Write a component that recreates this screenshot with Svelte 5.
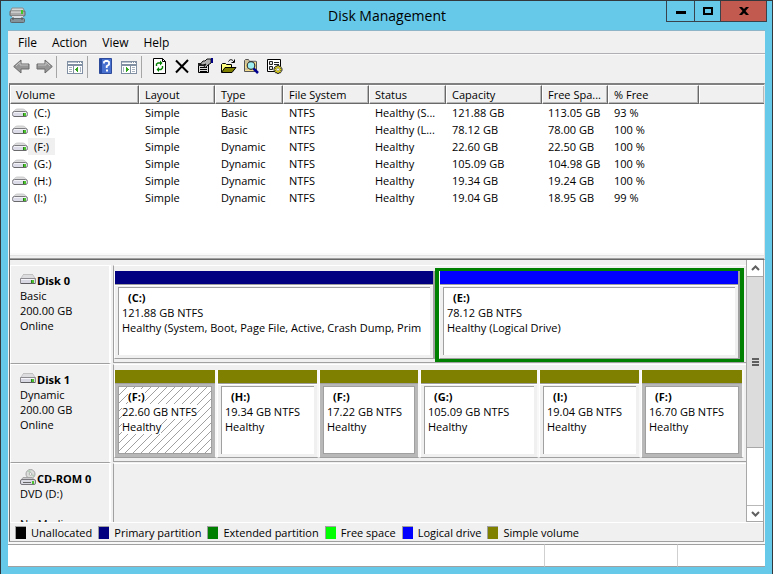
<script>
  const menus = ['File', 'Action', 'View', 'Help'];
  const columns = ['Volume', 'Layout', 'Type', 'File System', 'Status', 'Capacity', 'Free Spa...', '% Free', ''];
  const volumes = [
    ['(C:)', 'Simple', 'Basic', 'NTFS', 'Healthy (S...', '121.88 GB', '113.05 GB', '93 %'],
    ['(E:)', 'Simple', 'Basic', 'NTFS', 'Healthy (L...', '78.12 GB', '78.00 GB', '100 %'],
    ['(F:)', 'Simple', 'Dynamic', 'NTFS', 'Healthy', '22.60 GB', '22.50 GB', '100 %'],
    ['(G:)', 'Simple', 'Dynamic', 'NTFS', 'Healthy', '105.09 GB', '104.98 GB', '100 %'],
    ['(H:)', 'Simple', 'Dynamic', 'NTFS', 'Healthy', '19.34 GB', '19.24 GB', '100 %'],
    ['(I:)', 'Simple', 'Dynamic', 'NTFS', 'Healthy', '19.04 GB', '18.95 GB', '99 %']
  ];
  const disks = [
    {
      name: 'Disk 0', info: ['Basic', '200.00 GB', 'Online'],
      parts: [
        { name: '(C:)', size: '121.88 GB NTFS', status: 'Healthy (System, Boot, Page File, Active, Crash Dump, Prim', kind: 'primary', weight: 321 },
        { name: '(E:)', size: '78.12 GB NTFS', status: 'Healthy (Logical Drive)', kind: 'logical', weight: 301 }
      ]
    },
    {
      name: 'Disk 1', info: ['Dynamic', '200.00 GB', 'Online'],
      parts: [
        { name: '(F:)', size: '22.60 GB NTFS', status: 'Healthy', kind: 'simple', weight: 103, marked: true, hatched: true },
        { name: '(H:)', size: '19.34 GB NTFS', status: 'Healthy', kind: 'simple', weight: 102 },
        { name: '(F:)', size: '17.22 GB NTFS', status: 'Healthy', kind: 'simple', weight: 101, marked: true },
        { name: '(G:)', size: '105.09 GB NTFS', status: 'Healthy', kind: 'simple', weight: 119 },
        { name: '(I:)', size: '19.04 GB NTFS', status: 'Healthy', kind: 'simple', weight: 102 },
        { name: '(F:)', size: '16.70 GB NTFS', status: 'Healthy', kind: 'simple', weight: 103, marked: true }
      ]
    },
    { name: 'CD-ROM 0', cd: true, info: ['DVD (D:)', '\u00a0', 'No Media'], parts: [] }
  ];
  const legend = [
    ['unallocated', 'Unallocated'],
    ['primary', 'Primary partition'],
    ['extended', 'Extended partition'],
    ['free', 'Free space'],
    ['logical', 'Logical drive'],
    ['simple', 'Simple volume']
  ];
</script>

{#snippet volume()}
  <svg class="drive" width="16" height="10" viewBox="0 0 16 10" aria-hidden="true">
    <path d="M1 4C3 1.500 4 1 6 1h4c2 0 3 .5 5 3z" fill="#dededf" stroke="#c2c2c4" stroke-width=".8" />
    <rect x=".5" y="3.500" width="15" height="5" rx="2" fill="#dcdce8" stroke="#7c7c80" />
    <path d="M2 4.500h12" stroke="#f4f4f8" />
    <path d="M2 8.500h12" stroke="#69696c" />
    <path d="M11 5h3v3h-3z" fill="#4cc22e" />
    <path d="M11 5h1v3h-1z" fill="#2a7a1c" />
  </svg>
{/snippet}

{#snippet drive()}
  <svg class="drive" width="16" height="11" viewBox="0 0 16 11" aria-hidden="true">
    <path d="M3 1h10l3 4H0z" fill="#dddddf" />
    <path d="M3 .5h10" stroke="#c0c0c0" />
    <path d="M1 4.500l2-3.500M15 4.500L13 1" stroke="#c8c8ca" fill="none" />
    <path d="M.5 4.500h15v5H.5z" fill="#d8d8e2" stroke="#8c8c90" />
    <path d="M1 5.500h13" stroke="#f6f6fa" />
    <path d="M1 9.500h14" stroke="#5e5e62" />
    <path d="M11 6h3v3h-3z" fill="#4cc22e" />
    <path d="M11 6h1v3h-1z" fill="#2a7a1c" />
  </svg>
{/snippet}

{#snippet cdrom()}
  <svg class="cd" width="16" height="17" viewBox="0 0 16 17" aria-hidden="true">
    <circle cx="10.500" cy="5" r="4.500" fill="#dcdedc" stroke="#a4a4a4" />
    <path d="M10.500 5l-3-3 3-1zM10.500 5l3 3 1-2z" fill="#b2ccb6" />
    <circle cx="10.500" cy="5" r="1.300" fill="#fff" stroke="#999" stroke-width=".7" />
    <path d="M3 8.500h9l3 3H1z" fill="#c9c9cc" stroke="#a4a4a4" />
    <rect x=".5" y="10.500" width="15" height="5" rx="1.500" fill="#dadae2" stroke="#77777b" />
    <path d="M3 13.500h8" stroke="#666" />
    <path d="M12 12h2v3h-2z" fill="#4cc22e" />
  </svg>
{/snippet}

{#snippet part(p)}
  <div class="part {p.kind}" class:marked={p.marked} class:hatched={p.hatched}>
    <div class="bar"></div>
    <div class="frame">
      <div class="box">
        <div class="clip">
          <div class="pname"><b>{p.name}</b></div>
          <div><span>{p.size}</span></div>
          <div><span>{p.status}</span></div>
        </div>
      </div>
    </div>
  </div>
{/snippet}

<div class="window">
  <header class="title">
    <svg width="17" height="17" viewBox="0 0 17 17" aria-hidden="true">
      <path d="M3 1h11l2 4H1z" fill="#d4d6d6" stroke="#8c8c8c" />
      <rect x="1" y="4" width="15" height="5" rx="1" fill="#a9a9a9" stroke="#666" />
      <path d="M2 5h10" stroke="#eee" />
      <path d="M12 3h2v4h-2z" fill="#41c728" />
      <path d="M3 9h11v3H3z" fill="#d9dfe2" />
      <rect x="1.500" y="11.500" width="14" height="4" rx="1" fill="#84929a" stroke="#5d666b" />
      <path d="M4 10v3M13 10v3" stroke="#555" />
    </svg>
    <h1>Disk Management</h1>
    <div class="controls">
      <button class="min" aria-label="Minimize"><svg width="10" height="10" viewBox="0 0 10 10"><path d="M0 5h10v3H0z" /></svg></button>
      <button class="max" aria-label="Maximize"><svg width="10" height="10" viewBox="0 0 10 10"><path fill-rule="evenodd" d="M0 1h10v8H0zM2 3v4h6V3z" /></svg></button>
      <button class="close" aria-label="Close"><svg width="10" height="10" viewBox="0 0 10 10"><path d="M0 1h3l2 2 2-2h3L6.500 5 10 9H7L5 7 3 9H0l3.500-4z" /></svg></button>
    </div>
  </header>

  <div class="content">
    <nav class="menu">
      {#each menus as m}<button>{m}</button>{/each}
    </nav>

    <div class="tools" role="toolbar" aria-label="Tools">
      <button aria-label="Back"><svg width="17" height="17" viewBox="0 0 17 17"><path d="M.7 8.500L8 2v4h8v5H8v4z" fill="#969696" stroke="#6b6b6b" /><path d="M3 8l4-4v3h8" fill="none" stroke="#c4c4c4" /></svg></button>
      <button class="fwd" aria-label="Forward"><svg width="17" height="17" viewBox="0 0 17 17"><path d="M16.300 8.500L9 2v4H1v5h8v4z" fill="#969696" stroke="#6b6b6b" /><path d="M2 7h8V4l4 4" fill="none" stroke="#c4c4c4" /></svg></button>
      <i class="sep"></i>
      <button class="tree" aria-label="Show or hide console tree"><svg width="17" height="17" viewBox="0 0 17 17" shape-rendering="crispEdges"><path d="M0 3h16v13H0z" fill="#8290a3" /><path d="M1 5h14v1H1zM1 8h5v7H1zM7 8h8v7H7z" fill="#fff" /><path d="M1 4h9v1H1z" fill="#b8c2cf" /><path d="M11 4h1v1h-1zM13 4h1v1h-1z" fill="#fff" /><path d="M2 9h3v1H2zM2 11h3v1H2zM2 13h3v1H2zM13 9h1v5h-1z" fill="#a6b1bf" /><path d="M11 9v5L8 11.500z" fill="#31a51c" /></svg></button>
      <i class="sep"></i>
      <button class="help" aria-label="Help"><svg width="14" height="17" viewBox="0 0 14 17"><path d="M.5.500h12v15H.5z" fill="#4770cf" stroke="#2e4b9b" /><path d="M1 1h2v14H1z" fill="#2548a2" /><path d="M5 5.500V4l1.500-1h2L10 4v2.500L7.700 8.300V10" fill="none" stroke="#fff" stroke-width="1.800" /><path d="M7 11.500h2v2H7z" fill="#fff" /></svg></button>
      <button class="pane" aria-label="Show or hide action pane"><svg width="17" height="17" viewBox="0 0 17 17" shape-rendering="crispEdges"><path d="M0 3h16v13H0z" fill="#8290a3" /><path d="M1 5h14v1H1zM1 8h8v7H1zM10 8h5v7h-5z" fill="#fff" /><path d="M1 4h9v1H1z" fill="#b8c2cf" /><path d="M11 4h1v1h-1zM13 4h1v1h-1z" fill="#fff" /><path d="M11 9h3v1h-3zM11 11h3v1h-3zM11 13h3v1h-3zM2 9h1v5H2z" fill="#a6b1bf" /><path d="M5 9v5l3-2.500z" fill="#31a51c" /></svg></button>
      <i class="sep"></i>
      <button class="refresh" aria-label="Refresh"><svg width="16" height="17" viewBox="0 0 16 17"><path d="M1.500.500h9l3 3v12h-12z" fill="#fff" stroke="#000" /><path d="M10.500.500v3h3" fill="none" stroke="#000" /><path d="M4.500 8V6l1.500-1h3M10.500 8v2L9 11.500H6" fill="none" stroke="#008000" stroke-width="1.400" /><path d="M8 2.500v5L10.500 5zM7 9v5l-2.500-2.500z" fill="#008000" /></svg></button>
      <button aria-label="Delete"><svg width="16" height="17" viewBox="0 0 16 17"><path d="M2 2.500l12 12M14 2L2 14.500" fill="none" stroke="#000" stroke-width="2" /></svg></button>
      <button aria-label="Properties"><svg width="17" height="17" viewBox="0 0 17 17"><path d="M1.500 5.500h10v9h-10z" fill="#d8d8d8" stroke="#000" /><path d="M1 5h8v3H1z" fill="#222" /><path d="M3 9.500h7M3 11.500h7M3 13.500h7" stroke="#000" /><path d="M3 6.500L6 3h2l2-2h4v4l-3 2-3 3-1-1 2-3-3 1z" fill="#b0b0b0" stroke="#111" /><path d="M14 0h2v5h-2z" fill="#000080" /></svg></button>
      <button aria-label="Open"><svg width="17" height="17" viewBox="0 0 17 17"><path d="M1.500 14V6.500l1-1h3l1 1h5V9" fill="#ffff80" stroke="#000" /><path d="M1.500 14.500L5 9.500h11l-4 5z" fill="#808000" stroke="#000" /><path d="M8.500 3.500C10 1 12 1 14 4M14.500 1.500v3h-3" fill="none" stroke="#000" /></svg></button>
      <button aria-label="Find"><svg width="17" height="17" viewBox="0 0 17 17"><path d="M1.500 13.500v-11l1-1h3l1 2h7v10z" fill="#f3dc8c" stroke="#555" /><path d="M2 3h11M2 5h2M2 11h3" stroke="#aaa" /><circle cx="8" cy="7.500" r="3.800" fill="#9deef2" stroke="#333" stroke-width="1.200" /><path d="M10.500 10.500L15 15" stroke="#000090" stroke-width="2.500" /></svg></button>
      <button aria-label="Settings"><svg width="17" height="17" viewBox="0 0 17 17"><path d="M1.500 1.500h13v12h-13z" fill="#fff" stroke="#000" /><path d="M3.500 3.500h3v3h-3zM3.500 8.500h3v3h-3z" fill="#ddd" stroke="#222" /><path d="M8 4.500h5M8 6.500h5M8 9.500h2" stroke="#222" /><path d="M12 7v9M7.500 11.500h9M9 8.500l6 6M15 8.500l-6 6" stroke="#333" stroke-width="2.600" /><path d="M12 8v7M8.500 11.500h7M9.500 9l5 5M14.500 9l-5 5" stroke="#e8da20" stroke-width="1.500" /><circle cx="12" cy="11.500" r="1.300" fill="#fff" stroke="#777" stroke-width=".6" /></svg></button>
    </div>

    <section class="list" aria-label="Volumes">
      <table>
        <colgroup>
          <col class="w-vol" /><col class="w-lay" /><col class="w-type" /><col class="w-fs" /><col class="w-stat" /><col class="w-cap" /><col class="w-space" /><col class="w-pct" /><col />
        </colgroup>
        <thead>
          <tr>{#each columns as c}<th>{c}</th>{/each}</tr>
        </thead>
        <tbody>
          {#each volumes as v, r}
            <tr>
              {#each v as cell, i}
                {#if i === 0}
                  <td class="vol"><div>{@render volume()}<span class:current={r === 2}>{cell}</span></div></td>
                {:else}
                  <td>{cell}</td>
                {/if}
              {/each}
              <td></td>
            </tr>
          {/each}
        </tbody>
      </table>
      <div class="splitter"></div>
    </section>

    <section class="graph" aria-label="Disks">
      <div class="view">
        <div class="disks">
          {#each disks as d}
            <div class="disk">
              <div class="label">
                <div class="dname">{#if d.cd}{@render cdrom()}{:else}{@render drive()}{/if}<b>{d.name}</b></div>
                {#each d.info as line}<div>{line}</div>{/each}
              </div>
              <div class="parts">
                {#each d.parts as p}
                  <div class="slot" class:extended={p.kind === 'logical'} style="flex-grow: {p.weight}">
                    {@render part(p)}
                  </div>
                {/each}
              </div>
            </div>
          {/each}
        </div>
        <div class="scroll">
          <button aria-label="Scroll up"><svg width="9" height="6" viewBox="0 0 9 6"><path d="M1 5l3.500-3.500L8 5" /></svg></button>
          <div class="thumb"><i></i><i></i><i></i></div>
          <div class="track"></div>
          <button class="down" aria-label="Scroll down"><svg width="9" height="6" viewBox="0 0 9 6"><path d="M1 1l3.500 3.500L8 1" /></svg></button>
        </div>
      </div>
      <div class="legend">
        {#each legend as [kind, text]}
          <span class="key"><i class={kind}></i>{text}</span>
        {/each}
      </div>
    </section>

    <footer class="status"><div></div><div class="s2"></div><div class="s3"></div></footer>
  </div>
</div>

<style>
  :global(body) { background: #66c9ea; }
  .window, .window * { box-sizing: border-box; }
  .window {
    height: 100vh;
    display: flex;
    flex-direction: column;
    padding: 0 7px 7px;
    background: #66c9ea;
    border: solid #33383c;
    border-width: 1px 1px 0;
    font: 11px/15px "Open Sans", "Noto Sans", sans-serif;
    color: #000;
    overflow: hidden;
    cursor: default;
  }
  button { font: inherit; color: inherit; border: 0; background: none; padding: 0; margin: 0; }
  svg { display: block; flex: none; }

  .title { display: flex; align-items: flex-start; height: 29px; flex: none; }
  .title > svg { margin: 6px 0 0 1px; }
  h1 { flex: 1; margin: 0; padding-left: 82px; text-align: center; font-size: 14px; line-height: 29px; font-weight: 400; }
  .controls { display: flex; height: 21px; margin-right: -2px; border: solid #39424a; border-width: 0 1px 1px; }
  .controls button { display: flex; align-items: center; justify-content: center; height: 20px; }
  .min { width: 27px; }
  .controls .max { width: 26px; border-left: 1px solid #39424a; }
  .controls .close { width: 46px; border-left: 1px solid #39424a; background: #c35a50; }

  .content { flex: 1; min-height: 0; display: flex; flex-direction: column; background: #f0f0f0; border-top: 1px solid #8eb4c8; }
  .menu { display: flex; flex: none; height: 23px; gap: 15px; padding-left: 10px; border-bottom: 1px solid #b0b0b4; font-size: 12px; }
  .tools { display: flex; align-items: center; flex: none; height: 29px; padding: 0 0 5px 5px; border-top: 1px solid #fafafa; }
  .tools button { width: 23px; flex: none; }
  .tools .sep { width: 1px; height: 22px; background: #a6a6a6; }
  .tools .fwd { width: 20px; }
  .tools .tree { width: 30px; padding-left: 10px; }
  .tools .help { width: 33px; padding-left: 11px; }
  .tools .pane { width: 20px; }
  .tools .refresh { width: 32px; padding-left: 10px; }
  .tools .help svg, .tools .pane svg, .tools .tree svg, .tools .refresh svg { margin: 0; }

  .list {
    flex: 174 1 0;
    min-height: 0;
    display: flex;
    flex-direction: column;
    justify-content: space-between;
    margin-left: 1px;
    background: #fff;
    border: 1px solid #696969;
    border-top: 2px solid #808080;
    border-right-color: #e3e3e3;
    overflow: hidden;
  }
  table { width: 100%; table-layout: fixed; border-collapse: separate; border-spacing: 0; }
  .w-vol { width: 129px; }
  .w-lay { width: 76px; }
  .w-type { width: 68px; }
  .w-fs { width: 86px; }
  .w-stat { width: 77px; }
  .w-cap { width: 96px; }
  .w-space { width: 66px; }
  .w-pct { width: 91px; }
  th, td { text-align: left; font-weight: 400; white-space: nowrap; overflow: hidden; }
  th { height: 19px; padding: 0 0 0 5px; background: #f0f0f0; border: solid #fff; border-width: 1px; border-right-color: #696969; border-bottom-color: #696969; box-shadow: inset -1px -1px #b8b8b8; }
  th:last-child { border-right: 0; }
  td { height: 17px; padding: 0 0 0 6px; }
  .vol { padding-left: 2px; }
  .vol div { display: flex; align-items: center; }
  .vol span { padding: 0 6px; line-height: 17px; }
  .vol .current { background: #f0f0f0; }
  .splitter { height: 6px; flex: none; background: #f0f0f0; border-top: 2px solid #fafafa; border-bottom: 1px solid #a0a0a0; box-shadow: inset 0 1px #e3e3e3; }

  .graph { flex: 281 1 0; min-height: 0; display: flex; flex-direction: column; margin: 0 1px; border: solid #696969; border-width: 0 1px 1px; border-right-color: #a0a0a0; border-bottom-color: #a0a0a0; }
  .view { flex: 1; min-height: 0; display: flex; }
  .disks { flex: 1; min-width: 0; overflow: hidden; padding-top: 5px; }
  .disk { display: flex; height: 99px; }
  .label { flex: none; width: 101px; padding: 7px 0 0 9px; border: solid #fff; border-width: 1px 2px 0 1px; border-bottom: 1px solid #a0a0a0; white-space: nowrap; }
  .dname { display: flex; align-items: center; gap: 1px; height: 15px; }
  .dname svg { margin-bottom: 3px; }
  .parts { flex: 1; min-width: 0; display: flex; align-items: flex-start; margin: 0 0 1px 2px; padding: 2px 2px 0 0; border: solid #a0a0a0; border-width: 0 0 1px 1px; border-top: 1px solid #fff; }
  .slot { flex: 1 1 0; min-width: 0; padding-top: 3px; }
  .slot.extended { padding: 0; border: solid #008000; border-width: 3px 4px; }
  .part { height: 88px; display: flex; flex-direction: column; border: solid #fff; border-width: 0 2px 1px 1px; border-right-color: #a0a0a0; border-bottom-color: #a0a0a0; }
  .simple.part { border-right-color: #f8f8f8; }
  .bar { height: 14px; flex: none; border-bottom: 1px solid #a0a0a0; }
  .frame { flex: 1; min-height: 0; padding: 1px 3px 3px; border-top: 1px solid #fff; }
  .box { height: 100%; background: #fff; border: solid #a0a0a0; border-width: 1px 0 0 1px; padding: 2px 3px; }
  .marked .frame { background: #b8b8b8; border-top-color: #b8b8b8; }
  .marked .box { border-width: 1px; }
  .hatched .box { background: #fff linear-gradient(to bottom right, transparent 45%, #a0a0a0 45%, #a0a0a0 55%, transparent 55%) 0 0 / 8px 8px; }
  .hatched b, .hatched span { background: #fff; }
  .clip { overflow: hidden; white-space: nowrap; }
  .pname { padding-left: 6px; }
  .primary .bar, i.primary { background: #000080; }
  .logical .bar, i.logical { background: #0000ff; }
  .simple .bar, i.simple { background: #808000; }
  i.unallocated { background: #000; }
  i.extended { background: #008000; }
  i.free { background: #00ff00; }

  .scroll { width: 17px; flex: none; display: flex; flex-direction: column; background: #fff; border-left: 1px solid #a8a8a8; }
  .scroll button { height: 17px; flex: none; display: flex; align-items: center; justify-content: center; border-bottom: 1px solid #a8a8a8; }
  .scroll .down { border-top: 1px solid #b8b8b8; }
  .scroll path { fill: none; stroke: #606060; stroke-width: 2; }
  .thumb { flex: 171 1 0; background: #dcdcdc; border-bottom: 1px solid #a8a8a8; display: flex; flex-direction: column; align-items: center; justify-content: center; gap: 1px; }
  .thumb i { width: 7px; height: 2px; background: #606060; }
  .track { flex: 57 1 0; }

  .legend { height: 19px; flex: none; display: flex; align-items: center; gap: 6px; padding-left: 5px; border-top: 1px solid #fff; white-space: nowrap; }
  .key { display: flex; align-items: center; gap: 5px; }
  .key i { width: 11px; height: 13px; border-left: 1px solid #a0a0a0; border-top: 1px solid #a0a0a0; }

  .status { height: 25px; flex: none; display: flex; border-top: 2px solid #f8f8f8; }
  .status div { flex: 1; background: #fff; border: solid #a0a0a0; border-width: 1px 0; }
  .status .s2 { flex: 0 0 133px; border-left: 1px solid #d0d0d0; }
  .status .s3 { flex: 0 0 88px; border-left: 1px solid #d0d0d0; }
</style>
